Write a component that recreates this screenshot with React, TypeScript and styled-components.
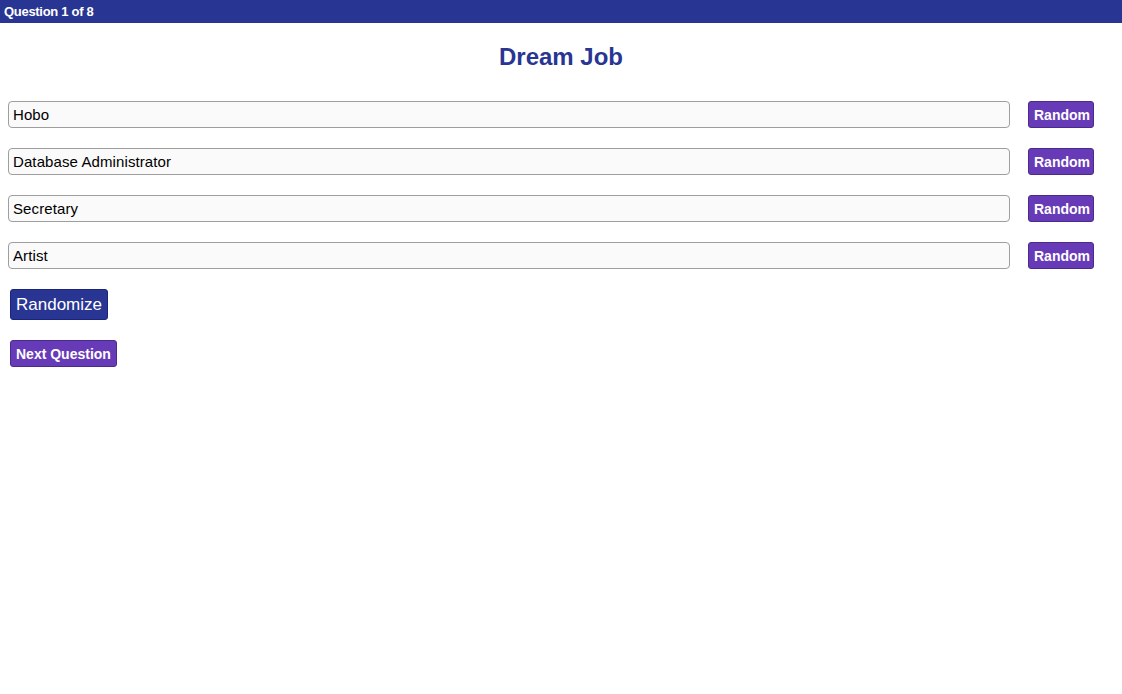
import React, { useState } from 'react';
import styled, { createGlobalStyle } from 'styled-components';

const GlobalStyle = createGlobalStyle`
  html, body {
    margin: 0;
    padding: 0;
    background: #ffffff;
    font-family: "Liberation Sans", Arial, sans-serif;
  }
`;

const TopBar = styled.div`
  height: 23px;
  background: #283593;
  color: #ffffff;
  font-size: 13px;
  font-weight: 700;
  line-height: 23px;
  padding-left: 4px;
  letter-spacing: -0.3px;
`;

const Title = styled.h1`
  margin: 22px 0 32px;
  text-align: center;
  color: #283593;
  font-size: 24px;
  line-height: 24px;
  font-weight: 700;
`;

const Content = styled.div`
  padding: 0 28px 0 8px;
`;

const Row = styled.div`
  display: flex;
  align-items: center;
  margin-bottom: 20px;
`;

const JobInput = styled.input`
  flex: 1;
  box-sizing: border-box;
  height: 27px;
  padding: 0 4px;
  border: 1px solid #9e9e9e;
  border-radius: 4px;
  background: #fafafa;
  font-family: "Liberation Sans", Arial, sans-serif;
  font-size: 15px;
  letter-spacing: 0.1px;
  color: #000000;
  outline: none;
`;

const Button = styled.button<{ $variant?: 'primary' | 'accent' }>`
  box-sizing: border-box;
  border: 1px solid ${(p) => (p.$variant === 'primary' ? '#1a237e' : '#4a2a8a')};
  border-radius: 3px;
  background: ${(p) => (p.$variant === 'primary' ? '#283593' : '#673ab7')};
  color: #ffffff;
  font-family: "Liberation Sans", Arial, sans-serif;
  cursor: pointer;
  padding: 0 5px;
`;

const RandomButton = styled(Button)`
  margin-left: 18px;
  width: 66px;
  height: 27px;
  font-size: 14px;
  font-weight: 600;
`;

const RandomizeButton = styled(Button)`
  display: block;
  margin: 0 0 20px 2px;
  height: 31px;
  font-size: 17px;
  font-weight: 400;
`;

const NextButton = styled(Button)`
  display: block;
  margin-left: 2px;
  height: 27px;
  font-size: 14px;
  font-weight: 700;
`;

const jobs = ['Hobo', 'Database Administrator', 'Secretary', 'Artist'];

const App: React.FC = () => {
  const [values, setValues] = useState<string[]>(jobs);

  return (
    <>
      <GlobalStyle />
      <TopBar>Question 1 of 8</TopBar>
      <Title>Dream Job</Title>
      <Content>
        {values.map((v, i) => (
          <Row key={i}>
            <JobInput
              type="text"
              value={v}
              onChange={(e) => {
                const next = [...values];
                next[i] = e.target.value;
                setValues(next);
              }}
            />
            <RandomButton $variant="accent">Random</RandomButton>
          </Row>
        ))}
        <RandomizeButton $variant="primary">Randomize</RandomizeButton>
        <NextButton $variant="accent">Next Question</NextButton>
      </Content>
    </>
  );
};

export default App;
